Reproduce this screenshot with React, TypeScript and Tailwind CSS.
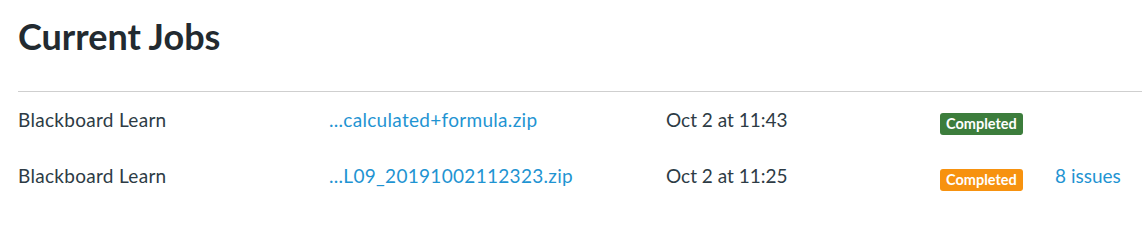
const JOBS = [
  {
    source: "Blackboard Learn",
    file: "...calculated+formula.zip",
    date: "Oct 2 at 11:43",
    badge: "bg-[#3c7d3c]",
    issues: "",
  },
  {
    source: "Blackboard Learn",
    file: "...L09_20191002112323.zip",
    date: "Oct 2 at 11:25",
    badge: "bg-[#f7920f]",
    issues: "8 issues",
  },
];

export default function App() {
  return (
    <div className="bg-white pl-[18px] pt-[15px] font-['Lato','Liberation_Sans',sans-serif] text-[#2d3b45]">
      <h1 className="text-[36px] font-bold leading-[1.2] text-[#222a30]">Current Jobs</h1>
      <div className="mt-[33px] border-t border-[#cfcfcf]">
        {JOBS.map((job, i) => (
          <div
            key={i}
            className="grid h-[56px] grid-cols-[311px_337px_274px_115px_1fr] items-center text-[19px] leading-[1.2]"
          >
            <span className="tracking-[0.3px]">{job.source}</span>
            <a href="#" className="tracking-[0.3px] text-[#1f94d2]">
              {job.file}
            </a>
            <span>{job.date}</span>
            <span className="pt-[5px]">
              <span
                className={`inline-block rounded-[3px] px-[6px] text-[14.5px] font-bold leading-[22px] text-white ${job.badge}`}
              >
                Completed
              </span>
            </span>
            {job.issues ? (
              <a href="#" className="text-[#1f94d2]">
                {job.issues}
              </a>
            ) : (
              <span />
            )}
          </div>
        ))}
      </div>
    </div>
  );
}
